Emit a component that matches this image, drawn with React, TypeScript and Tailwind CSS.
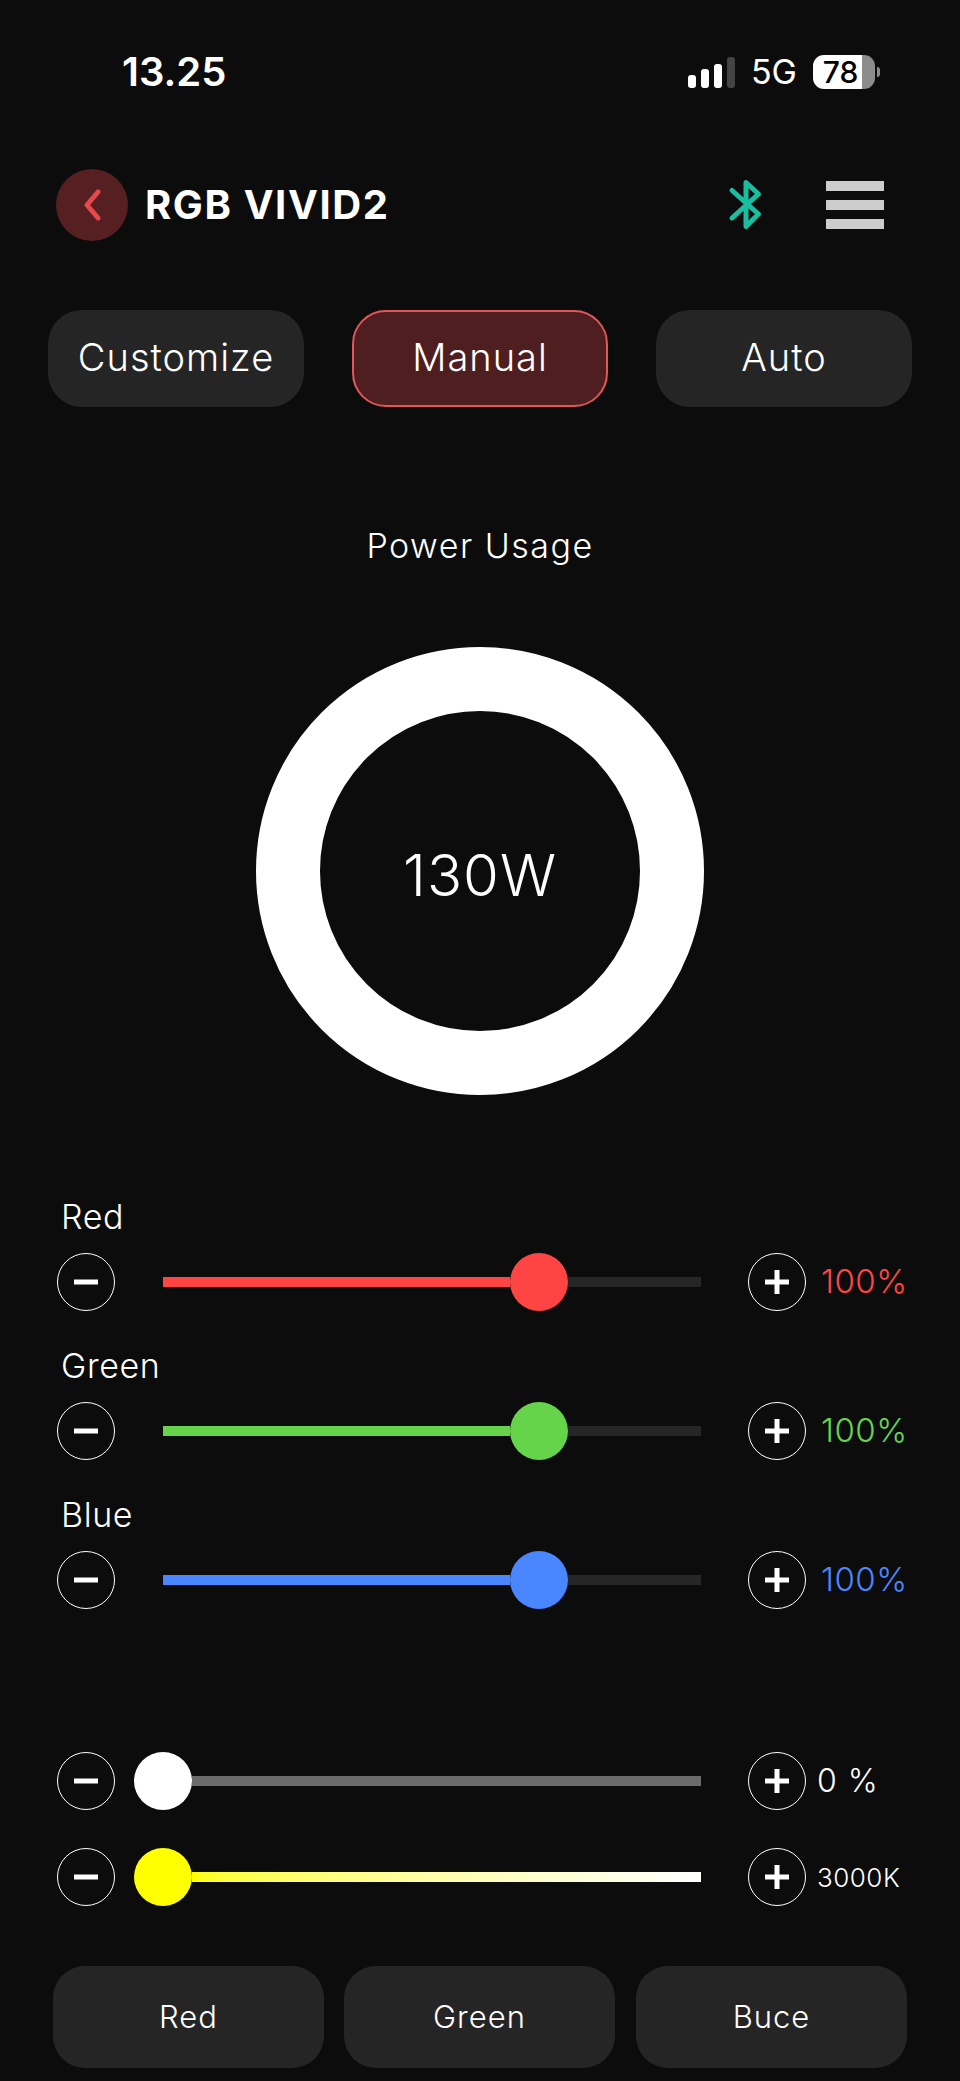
import React from 'react';

type SliderProps = {
  value: string;
  valueClass: string;
  thumbClass: string;
  fillClass?: string;
  restClass: string;
  atStart?: boolean;
};

function RoundButton({ plus }: { plus?: boolean }) {
  return (
    <button className="w-[58px] h-[58px] shrink-0 rounded-full border border-white flex items-center justify-center">
      <svg width="26" height="26" viewBox="0 0 26 26" fill="none" stroke="white" strokeWidth="5">
        <path d="M1 13H25" />
        {plus && <path d="M13 1V25" />}
      </svg>
    </button>
  );
}

function SliderRow({ value, valueClass, thumbClass, fillClass, restClass, atStart }: SliderProps) {
  return (
    <div className="flex items-center h-[58px] pl-[57px]">
      <RoundButton />
      <div className={`flex items-center w-[586px] shrink-0 ${atStart ? 'pl-[19px]' : 'pl-[48px]'}`}>
        {!atStart && <div className={`w-[347px] h-[10px] ${fillClass}`} />}
        <div className={`w-[58px] h-[58px] shrink-0 rounded-full ${thumbClass}`} />
        <div className={`flex-1 h-[10px] ${restClass}`} />
      </div>
      <div className="ml-[47px]">
        <RoundButton plus />
      </div>
      <span className={`whitespace-nowrap ${valueClass}`}>{value}</span>
    </div>
  );
}

function Bluetooth() {
  return (
    <svg width="36" height="52" viewBox="0 0 36 52" fill="none" stroke="#17bfa0" strokeWidth="5" strokeLinecap="round" strokeLinejoin="round">
      <path d="M4 11.5L30.5 35L18 47.5V3.5L30.5 15L4 39" />
    </svg>
  );
}

export default function App() {
  const rgb = [
    { label: 'Red', value: '100%', valueClass: 'text-[#ff4545]', thumbClass: 'bg-[#ff4444]', fillClass: 'bg-[#ff4444]' },
    { label: 'Green', value: '100%', valueClass: 'text-[#66d44a]', thumbClass: 'bg-[#66d44a]', fillClass: 'bg-[#66d44a]' },
    { label: 'Blue', value: '100%', valueClass: 'text-[#4a86ff]', thumbClass: 'bg-[#4a86ff]', fillClass: 'bg-[#4a86ff]' },
  ];

  return (
    <div className="w-[960px] h-[2081px] bg-[#0c0c0c] text-white overflow-hidden font-['Inter',sans-serif]">
      {/* Status bar */}
      <div className="flex items-center justify-between h-[144px] pl-[122px] pr-[80px]">
        <span className="text-[40px] font-semibold">13.25</span>
        <div className="flex items-center">
          <div className="flex items-end gap-[5px] h-[31px]">
            <div className="w-[8px] h-[13px] rounded-[3px] bg-white" />
            <div className="w-[8px] h-[19px] rounded-[3px] bg-white" />
            <div className="w-[8px] h-[24px] rounded-[3px] bg-white" />
            <div className="w-[8px] h-[31px] rounded-[3px] bg-[#444444]" />
          </div>
          <span className="ml-[16px] text-[34px] font-normal leading-none">5G</span>
          <div className="ml-[16px] flex items-center">
            <div className="flex w-[62px] h-[34px] rounded-[11px] overflow-hidden">
              <div className="w-[49px] bg-white text-black text-[30px] font-medium leading-[34px] text-center pl-[6px]">78</div>
              <div className="flex-1 bg-[#8c8c8c]" />
            </div>
            <div className="ml-[2px] w-[3px] h-[10px] rounded-r-full bg-[#8c8c8c]" />
          </div>
        </div>
      </div>

      {/* Header */}
      <div className="flex items-center justify-between h-[122px] pl-[56px] pr-[76px]">
        <div className="flex items-center">
          <div className="w-[72px] h-[72px] rounded-full bg-[#562023] flex items-center justify-center">
            <svg width="24" height="34" viewBox="0 0 24 34" fill="none" stroke="#e5484d" strokeWidth="5" strokeLinecap="round" strokeLinejoin="round">
              <path d="M18 4L7 17L18 30" />
            </svg>
          </div>
          <span className="ml-[17px] text-[40px] font-bold tracking-[1.6px]">RGB VIVID2</span>
        </div>
        <div className="flex items-center gap-[62px]">
          <Bluetooth />
          <div className="flex flex-col gap-[9px]">
            <div className="w-[58px] h-[10px] bg-[#cccccc]" />
            <div className="w-[58px] h-[10px] bg-[#cccccc]" />
            <div className="w-[58px] h-[10px] bg-[#cccccc]" />
          </div>
        </div>
      </div>

      {/* Mode tabs */}
      <div className="mt-[44px] px-[48px] flex justify-between">
        <button className="w-[256px] h-[97px] pb-[2px] rounded-[34px] bg-[#252525] text-[38px] font-light tracking-[1px]">Customize</button>
        <button className="w-[256px] h-[97px] pb-[2px] rounded-[34px] bg-[#4f1e21] border-2 border-[#e0565a] text-[38px] font-light tracking-[1px]">Manual</button>
        <button className="w-[256px] h-[97px] pb-[2px] rounded-[34px] bg-[#252525] text-[38px] font-light tracking-[1px]">Auto</button>
      </div>

      {/* Power gauge */}
      <div className="mt-[119px] h-[40px] leading-[40px] text-center text-[34px] font-light tracking-[1.5px]">Power Usage</div>
      <div className="mt-[81px] mx-auto w-[448px] h-[448px] rounded-full border-[64px] border-white flex items-center justify-center">
        <span className="text-[58px] font-light tracking-[1px] mt-[8px]">130W</span>
      </div>

      {/* RGB sliders */}
      <div className="mt-[102px] flex flex-col gap-[35px]">
        {rgb.map((row) => (
          <div key={row.label}>
            <div className="h-[40px] leading-[40px] pl-[61px] mb-[16px] text-[34px] font-light tracking-[0.6px]">{row.label}</div>
            <SliderRow
              value={row.value}
              valueClass={`ml-[15px] text-[33px] font-light tracking-[0.5px] ${row.valueClass}`}
              thumbClass={row.thumbClass}
              fillClass={row.fillClass}
              restClass="bg-[#262626]"
            />
          </div>
        ))}
      </div>

      {/* White and colour temperature */}
      <div className="mt-[143px] flex flex-col gap-[38px]">
        <SliderRow
          atStart
          value="0 %"
          valueClass="ml-[11px] text-[32px] font-light tracking-[1px]"
          thumbClass="bg-white"
          restClass="bg-[#6b6b6b]"
        />
        <SliderRow
          atStart
          value="3000K"
          valueClass="ml-[11px] text-[26px] font-light tracking-[0.5px]"
          thumbClass="bg-[#ffff00]"
          restClass="bg-gradient-to-r from-[#ffff00] to-white"
        />
      </div>

      {/* Presets */}
      <div className="mt-[60px] pl-[53px] flex gap-[20px]">
        <button className="w-[271px] h-[102px] rounded-[32px] bg-[#252525] text-[31px] font-light tracking-[1px]">Red</button>
        <button className="w-[271px] h-[102px] rounded-[32px] bg-[#252525] text-[31px] font-light tracking-[1px]">Green</button>
        <button className="w-[271px] h-[102px] ml-[1px] rounded-[32px] bg-[#252525] text-[31px] font-light tracking-[1px]">Buce</button>
      </div>
    </div>
  );
}
